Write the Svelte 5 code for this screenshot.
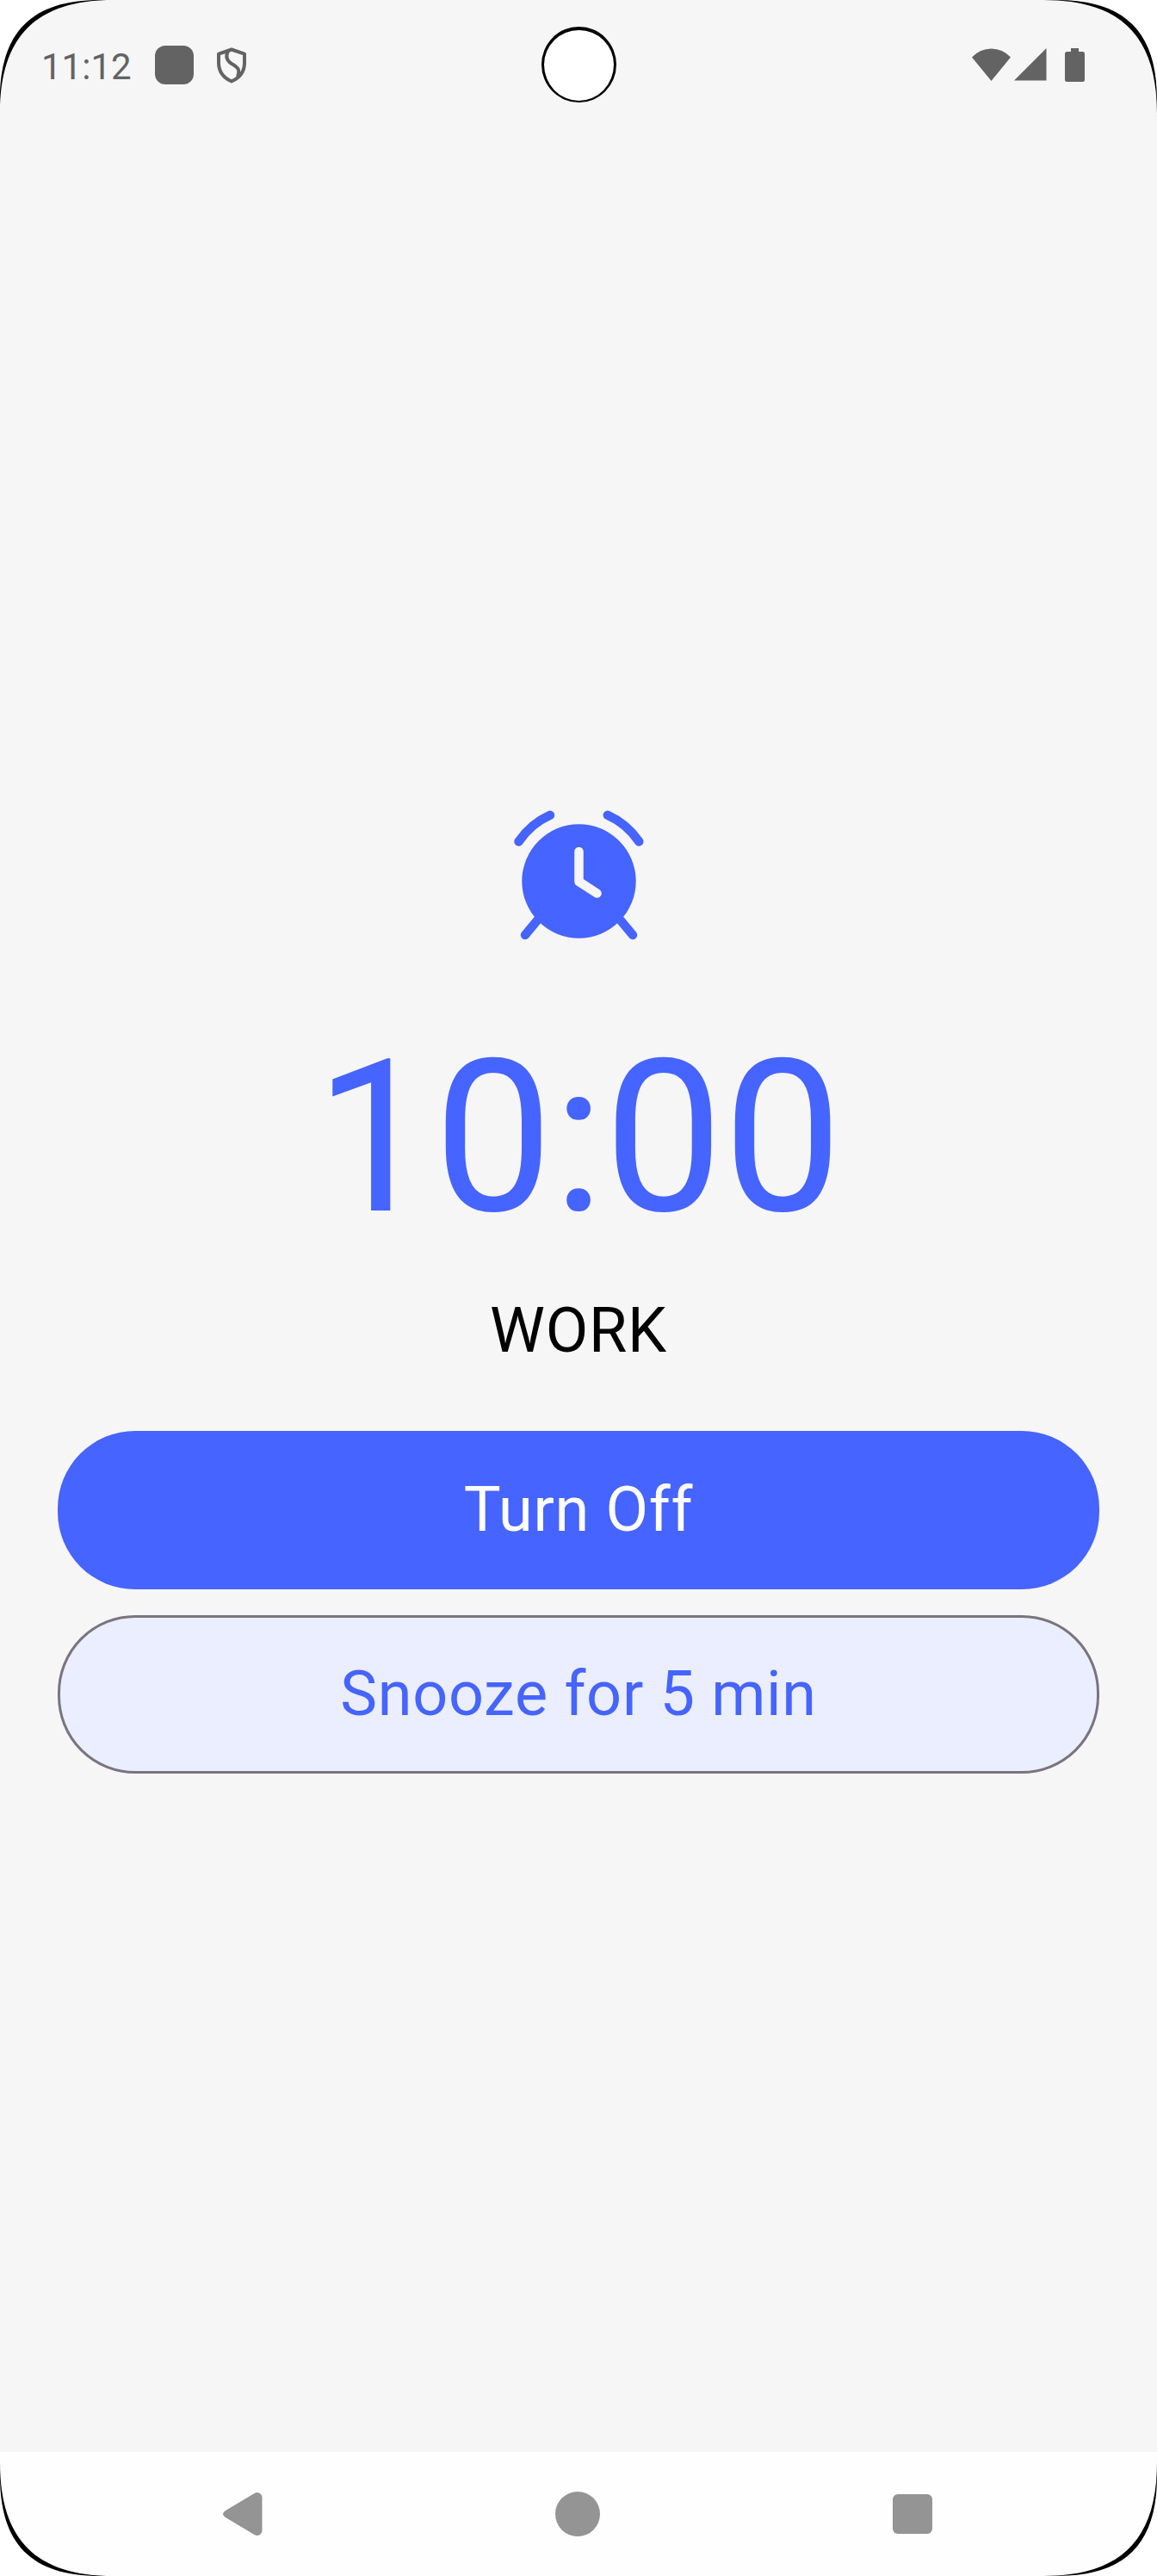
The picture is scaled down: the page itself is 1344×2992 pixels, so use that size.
<script>
  const actions = [
    { label: 'Turn Off', kind: 'primary' },
    { label: 'Snooze for 5 min', kind: 'secondary' }
  ];
  const corners = ['tl', 'tr', 'bl', 'br'];
</script>

<div class="device">
  <header class="status">
    <div class="left">
      <span class="clock">11:12</span>
      <span class="app-dot"></span>
      <svg class="shield" width="36" height="44" viewBox="0 0 36 44" fill="none" stroke="#636363" stroke-width="4" stroke-linejoin="round">
        <path d="M18 3.500 L3 8.700 V19 C3 29 9 36.500 18 40.500 C27 36.500 33 29 33 19 V8.700 Z" />
        <path d="M14 5 C10.500 12 12.500 16.500 18 20 C26 24.500 28 27 25 35" />
      </svg>
    </div>
    <div class="right">
      <svg width="46" height="38" viewBox="0 0 46 38" fill="#636363">
        <path d="M0 10.500 Q9.500 0.500 22.500 0.500 Q35.500 0.500 45 10.500 L22.500 38 Z" />
      </svg>
      <svg class="signal" width="38" height="38" viewBox="0 0 38 38" fill="#636363"><path d="M37.500 0 V37.500 H0 Z" /></svg>
      <svg class="battery" width="23" height="39" viewBox="0 0 23 39" fill="#636363">
        <rect x="7" y="0" width="9" height="6" />
        <rect x="0" y="4" width="23" height="35" rx="2.500" />
      </svg>
    </div>
    <span class="camera"></span>
  </header>

  <main>
    <svg class="alarm" width="160" height="160" viewBox="0 0 160 160" fill="none" stroke="#4664ff" stroke-width="10.500" stroke-linecap="round" stroke-linejoin="round">
      <circle cx="80.500" cy="80.500" r="66.200" fill="#4664ff" stroke="none" />
      <path d="M10.500 34.500 C20 20.500 32 10.500 47 3.800" />
      <path d="M150.300 34.500 C140.800 20.500 128.800 10.500 113.800 3.800" />
      <path d="M32.500 125.500 L18 143" />
      <path d="M128.500 125.500 L143 143" />
      <path d="M80.500 46 V81 L101.500 94.600" stroke="#f6f6f6" />
    </svg>
    <div class="time">10:00</div>
    <div class="name">WORK</div>
    <div class="actions">
      {#each actions as a}
        <button class={a.kind}>{a.label}</button>
      {/each}
    </div>
  </main>

  <nav>
    <svg width="46" height="52" viewBox="0 0 46 52" fill="#949494">
      <path d="M36.500 2 Q41 -0.500 44 3 Q45.500 4.500 45.500 7 V45 Q45.500 47.500 44 49 Q41 52.500 36.500 50 L3 30 Q0 28 0 26 Q0 24 3 22 Z" />
    </svg>
    <span class="home"></span>
    <span class="recent"></span>
  </nav>

  {#each corners as c}
    <svg class="corner {c}" width="132" height="132" viewBox="0 0 132 132">
      <path d="M0 0 H132 C42 0 0 42 0 132 Z" fill="#000" />
      <path d="M0 0 H116 C37 0 0 37 0 116 Z" fill="#fff" />
    </svg>
  {/each}
</div>

<style>
  :global(body) { margin: 0; background: #fff; }
  .device {
    position: relative;
    width: 1344px;
    height: 2992px;
    overflow: hidden;
    background: #f6f6f6;
    font-family: Roboto, sans-serif;
    display: flex;
    flex-direction: column;
  }
  .status {
    position: relative;
    height: 151px;
    box-sizing: border-box;
    padding: 0 84px 0 48px;
    display: flex;
    justify-content: space-between;
    align-items: center;
    flex: none;
  }
  .left, .right { display: flex; align-items: center; }
  .right { padding-bottom: 1px; }
  .clock { width: 132px; font-size: 42px; line-height: 50px; color: #636363; padding-top: 4px; }
  .app-dot { width: 45px; height: 45px; border-radius: 12px; background: #636363; }
  .shield { margin-left: 26px; }
  .signal { margin-left: 3px; }
  .battery { margin-left: 21px; }
  .camera {
    position: absolute;
    left: 629px;
    top: 31px;
    width: 81px;
    height: 82px;
    border: solid #000;
    border-width: 4px 3px 2px;
    border-radius: 50%;
    background: #fff;
  }
  main {
    flex: 1;
    display: flex;
    flex-direction: column;
    align-items: center;
    padding-top: 792px;
  }
  .alarm { overflow: visible; }
  .time { margin-top: 75px; font-size: 246px; line-height: 288px; color: #4664ff; }
  .name { margin-top: 32px; font-size: 72px; line-height: 96px; letter-spacing: 0.700px; color: #000; }
  .actions { width: 90%; margin-top: 68px; display: flex; flex-direction: column; gap: 30px; }
  button {
    height: 184px;
    box-sizing: border-box;
    border-radius: 90px;
    border: 0;
    padding: 0;
    font: 400 72px/96px Roboto, sans-serif;
    letter-spacing: 0.700px;
  }
  .primary { background: #4664ff; color: #fff; }
  .secondary { background: #ebeeff; color: #4664ff; border: 3px solid #79747e; }
  nav {
    height: 144px;
    flex: none;
    box-sizing: border-box;
    padding: 0 261px 0 259px;
    background: #fefefe;
    display: flex;
    justify-content: space-between;
    align-items: center;
  }
  .home { width: 52px; height: 52px; border-radius: 50%; background: #949494; }
  .recent { width: 46px; height: 46px; border-radius: 6px; background: #949494; }
  .corner { position: absolute; }
  .tl { left: 0; top: 0; }
  .tr { right: 0; top: 0; transform: scaleX(-1); }
  .bl { left: 0; bottom: 0; transform: scaleY(-1); }
  .br { right: 0; bottom: 0; transform: scale(-1); }
</style>
